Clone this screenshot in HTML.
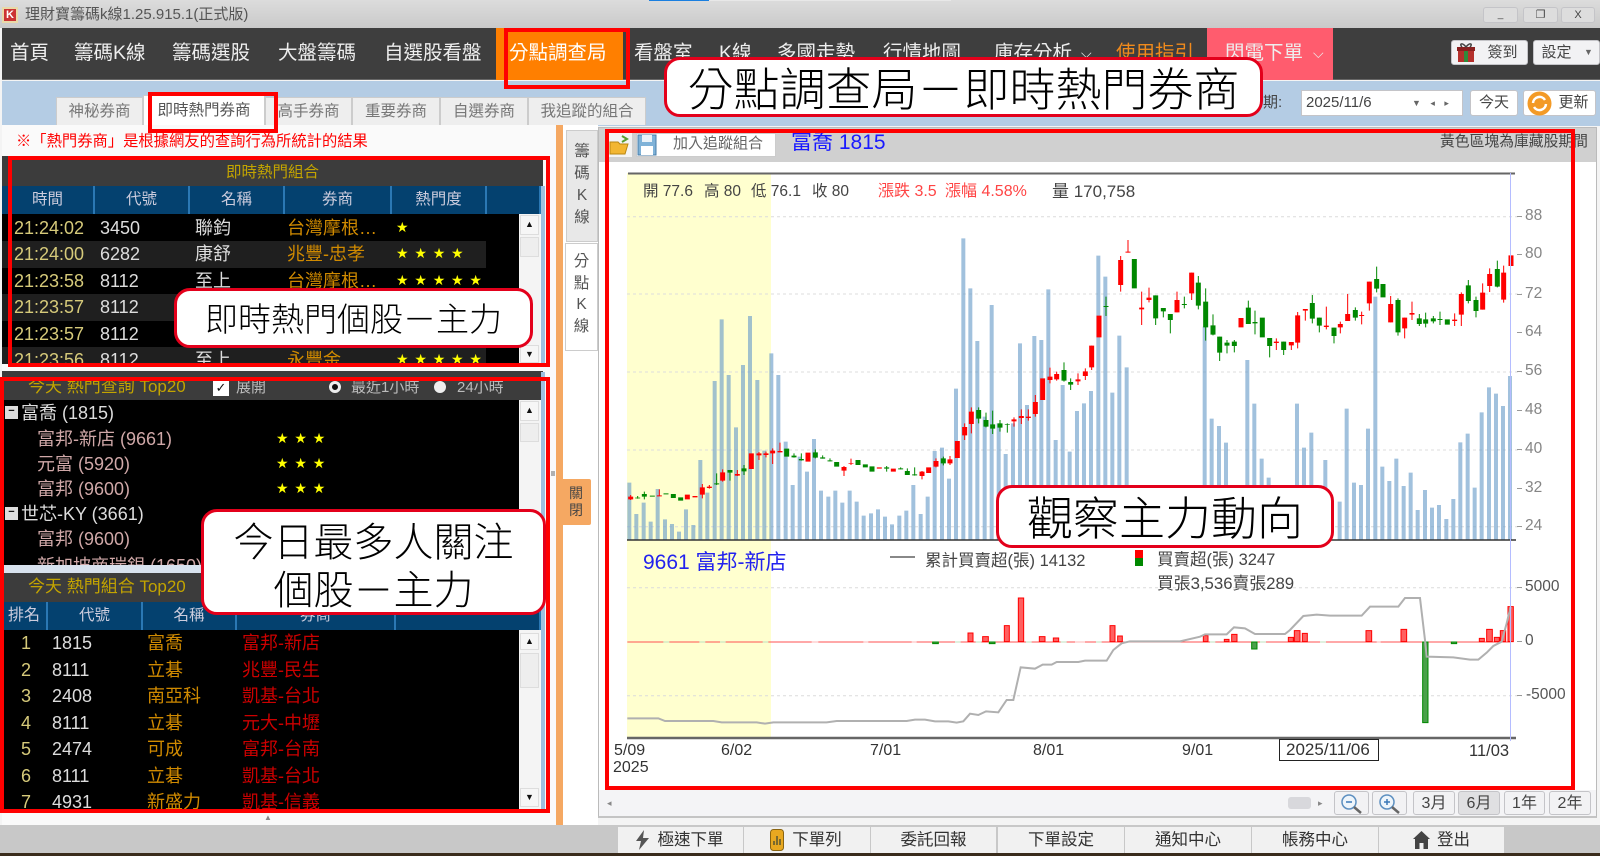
<!DOCTYPE html>
<html lang="zh-Hant"><head><meta charset="utf-8"><title>理財寶籌碼k線</title>
<style>
*{box-sizing:border-box}
html,body{margin:0;padding:0;width:1600px;height:856px;overflow:hidden;background:#f4f4f4}
body{position:relative;font-family:"Liberation Sans","Noto Sans CJK TC",sans-serif;font-size:15px;color:#333;filter:blur(.35px)}
.b,.t{position:absolute}
.t{white-space:nowrap;line-height:20px;height:20px}
.n{color:#eee;font-size:19.5px;top:43px}
.tab{position:absolute;top:97px;height:28px;background:#eee;border:1px solid #ccc;border-bottom:0;color:#777;font-size:15.5px;line-height:28px;text-align:center}
.hd{position:absolute;background:#04416f;border-right:2px solid #2b78b4;color:#ccd;text-align:center;font-size:15.5px}
.r{position:absolute;left:0;width:484px;height:26.4px;line-height:26px;font-size:18px;white-space:nowrap}
.r i{position:absolute;top:0;font-style:normal}
.s{color:#ff0;font-family:"DejaVu Sans",sans-serif;font-size:14px;letter-spacing:5.8px;margin-left:-1px}
.frame{position:absolute;border:4.5px solid #f00}
.call{position:absolute;background:#fff;border:3.5px solid #e3001b;border-radius:16px;color:#000;text-align:center;font-family:"Noto Sans CJK TC","Noto Sans CJK SC",sans-serif;font-weight:300;white-space:nowrap}
.btn{position:absolute;background:#f2f2f4;border:1px solid #c4c4c8;border-radius:3px;text-align:center;color:#444}
.foot{position:absolute;top:827px;height:26px;background:#f1f1f1;text-align:center;line-height:26px;font-size:16.5px;color:#333}
.ax{position:absolute;left:1525px;color:#858585;font-size:15.5px;line-height:18px;height:18px}
.d{position:absolute;color:#333;font-size:16px;line-height:18px;white-space:nowrap}
.sb{position:absolute;left:519px;width:21px;background:#f4f4f4}
.ub{position:absolute;left:1px;width:19px;background:#f6f6f6;border:1px solid #ddd;color:#111;font-size:9px;line-height:17px;text-align:center}
</style></head><body>

<!-- title bar -->
<div class="b" style="left:0;top:0;width:1600px;height:28px;background:linear-gradient(#dcdcdc,#c9c9c9)"></div>
<div class="b" style="left:649px;top:0;width:60px;height:1px;background:#1a7fe0"></div>
<div class="b" style="left:709px;top:0;width:242px;height:1px;background:#e8e8e8"></div>
<div class="b" style="left:2px;top:7px;width:16px;height:16px;background:#c33;border:2px solid #e9d9a8;color:#fff;font:bold 11px/12px 'Liberation Sans',sans-serif;text-align:center">K</div>
<div class="t" style="left:25px;top:5px;font-size:15px;color:#555">理財寶籌碼k線1.25.915.1(正式版)</div>
<div class="btn" style="left:1483px;top:7px;width:35px;height:16px;background:#ddd;font-size:10px;line-height:14px">_</div>
<div class="btn" style="left:1523px;top:7px;width:35px;height:16px;background:#ddd;font-size:11px;line-height:14px">❐</div>
<div class="btn" style="left:1561px;top:7px;width:34px;height:16px;background:#ddd;font-size:11px;line-height:14px">X</div>

<!-- nav -->
<div class="b" style="left:2px;top:28px;width:1598px;height:52px;background:#3e3e3e;border-bottom:1px solid #666"></div>
<div class="t n" style="left:10px">首頁</div>
<div class="t n" style="left:74px">籌碼K線</div>
<div class="t n" style="left:172px">籌碼選股</div>
<div class="t n" style="left:278px">大盤籌碼</div>
<div class="t n" style="left:384px">自選股看盤</div>
<div class="b" style="left:496px;top:28px;width:127px;height:52px;background:#ff7f00"></div>
<div class="t n" style="left:509px;color:#fff">分點調查局</div>
<div class="t n" style="left:634px">看盤室</div>
<div class="t n" style="left:719px">K線</div>
<div class="t n" style="left:777px">多國走勢</div>
<div class="t n" style="left:883px">行情地圖</div>
<div class="t n" style="left:994px">庫存分析</div>
<div class="t n" style="left:1081px;font-size:14px">⌵</div>
<div class="t n" style="left:1116px;color:#f08a1c">使用指引</div>
<div class="b" style="left:1207px;top:28px;width:126px;height:52px;background:#ff5c6e"></div>
<div class="t n" style="left:1225px">閃電下單</div>
<div class="t n" style="left:1313px;font-size:14px">⌵</div>
<div class="btn" style="left:1451px;top:40px;width:77px;height:25px;line-height:23px;padding-left:26px;font-size:15px">簽到</div>
<svg class="b" style="left:1456px;top:42px" width="20" height="21" viewBox="0 0 20 21"><rect x="2" y="6" width="16" height="14" fill="#b5302c"/><rect x="8" y="6" width="4" height="14" fill="#2f8a3a"/><rect x="1" y="5" width="18" height="4" fill="#8a2020"/><path d="M10 5C6 0 3 2 6 5M10 5c4-5 7-3 4 0" fill="none" stroke="#444" stroke-width="1.5"/></svg>
<div class="btn" style="left:1533px;top:40px;width:67px;height:25px;line-height:23px;padding-right:20px;font-size:15px">設定<span style="position:absolute;left:50px;font-size:9px;color:#666">▼</span></div>

<!-- tab strip -->
<div class="b" style="left:2px;top:81px;width:1598px;height:45px;background:#b4cce4"></div>
<div class="tab" style="left:56px;width:87px">神秘券商</div>
<div class="tab" style="left:143px;top:95px;width:122px;height:30px;background:#fff;color:#555;line-height:30px">即時熱門券商</div>
<div class="tab" style="left:265px;width:87px">高手券商</div>
<div class="tab" style="left:352px;width:88px">重要券商</div>
<div class="tab" style="left:440px;width:88px">自選券商</div>
<div class="tab" style="left:528px;width:118px">我追蹤的組合</div>
<div class="t" style="left:1248px;top:93px;color:#444;font-size:15px">日期:</div>
<div class="b" style="left:1301px;top:90px;width:162px;height:26px;background:#fff;border:1px solid #c4c4c8"></div>
<div class="t" style="left:1306px;top:93px;color:#444;font-size:15px">2025/11/6</div>
<div class="t" style="left:1412px;top:93px;color:#666;font-size:9px;word-spacing:7px">▼ ◂ ▸</div>
<div class="btn" style="left:1470px;top:90px;width:48px;height:26px;line-height:24px;background:#fff;font-size:15px">今天</div>
<div class="btn" style="left:1523px;top:90px;width:73px;height:26px;line-height:24px;background:#fff;padding-left:28px;font-size:15px">更新</div>
<svg class="b" style="left:1527px;top:91px" width="25" height="25" viewBox="0 0 25 25"><circle cx="12.5" cy="12.5" r="12" fill="#f39a26"/><path d="M6 12a6.500 6.500 0 0 1 12-3M19 13a6.500 6.500 0 0 1-12 3" fill="none" stroke="#fff" stroke-width="2.500"/></svg>

<!-- left panel -->
<div class="b" style="left:2px;top:125px;width:554px;height:700px;background:#fafafa"></div>
<div class="t" style="left:16px;top:132px;color:#f00;font-size:15.300px">※「熱門券商」是根據網友的查詢行為所統計的結果</div>

<!-- table 1 -->
<div class="b" style="left:2px;top:156px;width:541px;height:30px;background:#3c3c3c;color:#c3a400;text-align:center;line-height:34px;font-size:15.500px">即時熱門組合</div>
<div class="hd" style="left:2px;top:186px;width:93px;height:28px;line-height:28px">時間</div>
<div class="hd" style="left:95px;top:186px;width:95px;height:28px;line-height:28px">代號</div>
<div class="hd" style="left:190px;top:186px;width:95px;height:28px;line-height:28px">名稱</div>
<div class="hd" style="left:285px;top:186px;width:107px;height:28px;line-height:28px">券商</div>
<div class="hd" style="left:392px;top:186px;width:95px;height:28px;line-height:28px">熱門度</div>
<div class="hd" style="left:487px;top:186px;width:54px;height:28px"></div>
<div class="b" style="left:2px;top:214px;width:517px;height:150px;background:#000;overflow:hidden">
<div class="r" style="top:1px"><i style="left:12px;color:#d6ca7a">21:24:02</i><i style="left:98px;color:#ddd">3450</i><i style="left:193px;color:#ddd">聯鈞</i><i style="left:285px;color:#d08a00">台灣摩根…</i><i class="s" style="left:395px">★</i></div>
<div class="r" style="top:27.400px;background:#1f1f1f"><i style="left:12px;color:#d6ca7a">21:24:00</i><i style="left:98px;color:#ddd">6282</i><i style="left:193px;color:#ddd">康舒</i><i style="left:285px;color:#d08a00">兆豐-忠孝</i><i class="s" style="left:395px">★★★★</i></div>
<div class="r" style="top:53.800px"><i style="left:12px;color:#d6ca7a">21:23:58</i><i style="left:98px;color:#ddd">8112</i><i style="left:193px;color:#ddd">至上</i><i style="left:285px;color:#d08a00">台灣摩根…</i><i class="s" style="left:395px">★★★★★</i></div>
<div class="r" style="top:80.200px;background:#1f1f1f"><i style="left:12px;color:#d6ca7a">21:23:57</i><i style="left:98px;color:#ddd">8112</i></div>
<div class="r" style="top:106.600px"><i style="left:12px;color:#d6ca7a">21:23:57</i><i style="left:98px;color:#ddd">8112</i></div>
<div class="r" style="top:133px;background:#1f1f1f"><i style="left:12px;color:#d6ca7a">21:23:56</i><i style="left:98px;color:#ddd">8112</i><i style="left:193px;color:#ddd">至上</i><i style="left:285px;color:#d08a00">永豐金</i><i class="s" style="left:395px">★★★★★</i></div>
</div>
<div class="sb" style="top:214px;height:150px"><div class="ub" style="top:1px;height:20px">▲</div><div class="ub" style="top:23px;height:20px;background:#eee"></div><div class="ub" style="top:131px;height:18px">▼</div></div>
<div class="b" style="left:541px;top:186px;width:4px;height:180px;background:#9fc0e0"></div>

<!-- section 2 -->
<div class="b" style="left:2px;top:371px;width:541px;height:29px;background:#3c3c3c"></div>
<div class="t" style="left:28px;top:377px;color:#c3a400;font-size:17px">今天 熱門查詢 Top20</div>
<div class="b" style="left:213px;top:381px;width:16px;height:15px;background:#fff;color:#111;font:bold 13px/15px 'DejaVu Sans',sans-serif;text-align:center">✓</div>
<div class="t" style="left:236px;top:378px;color:#bbb">展開</div>
<div class="b" style="left:329px;top:381px;width:12px;height:12px;border-radius:50%;background:#111;border:3px solid #eee"></div>
<div class="t" style="left:351px;top:378px;color:#bbb">最近1小時</div>
<div class="b" style="left:434px;top:381px;width:12px;height:12px;border-radius:50%;background:#eee"></div>
<div class="t" style="left:457px;top:378px;color:#bbb">24小時</div>
<div class="b" style="left:2px;top:400px;width:517px;height:165px;background:#000;overflow:hidden">
<div class="r" style="top:0"><i style="left:3px;top:6px;width:13px;height:13px;background:#ddd;color:#111;font:bold 11px/11px 'Liberation Sans',sans-serif;text-align:center">−</i><i style="left:19px;color:#ddd">富喬 (1815)</i></div>
<div class="r" style="top:26px"><i style="left:35px;color:#d0a8a8">富邦-新店 (9661)</i><i class="s" style="left:275px">★★★</i></div>
<div class="r" style="top:51px"><i style="left:35px;color:#d0a8a8">元富 (5920)</i><i class="s" style="left:275px">★★★</i></div>
<div class="r" style="top:76px"><i style="left:35px;color:#d0a8a8">富邦 (9600)</i><i class="s" style="left:275px">★★★</i></div>
<div class="r" style="top:101px"><i style="left:3px;top:6px;width:13px;height:13px;background:#ddd;color:#111;font:bold 11px/11px 'Liberation Sans',sans-serif;text-align:center">−</i><i style="left:19px;color:#ddd">世芯-KY (3661)</i></div>
<div class="r" style="top:126px"><i style="left:35px;color:#d0a8a8">富邦 (9600)</i></div>
<div class="r" style="top:153px"><i style="left:35px;color:#d0a8a8">新加坡商瑞銀 (1650)</i></div>
</div>
<div class="sb" style="top:400px;height:165px"><div class="ub" style="top:1px;height:20px">▲</div><div class="ub" style="top:23px;height:19px;background:#eee"></div></div>
<div class="b" style="left:541px;top:372px;width:4px;height:440px;background:#9fc0e0"></div>
<div class="b" style="left:2px;top:565px;width:541px;height:8px;background:#d8e2ee"></div>

<!-- section 3 -->
<div class="b" style="left:2px;top:573px;width:541px;height:29px;background:#3c3c3c"></div>
<div class="t" style="left:28px;top:577px;color:#c3a400;font-size:17px">今天 熱門組合 Top20</div>
<div class="hd" style="left:2px;top:602px;width:46px;height:28px;line-height:28px;font-size:16px">排名</div>
<div class="hd" style="left:48px;top:602px;width:95px;height:28px;line-height:28px">代號</div>
<div class="hd" style="left:143px;top:602px;width:94px;height:28px;line-height:28px">名稱</div>
<div class="hd" style="left:237px;top:602px;width:159px;height:28px;line-height:28px">券商</div>
<div class="hd" style="left:396px;top:602px;width:145px;height:28px"></div>
<div class="b" style="left:2px;top:630px;width:517px;height:180px;background:#000;overflow:hidden">
<div class="r" style="top:0"><i style="left:19px;color:#d6ca7a">1</i><i style="left:50px;color:#ddd">1815</i><i style="left:145px;color:#d08a00">富喬</i><i style="left:240px;color:#cc0000">富邦-新店</i></div>
<div class="r" style="top:27px"><i style="left:19px;color:#d6ca7a">2</i><i style="left:50px;color:#ddd">8111</i><i style="left:145px;color:#d08a00">立碁</i><i style="left:240px;color:#cc0000">兆豐-民生</i></div>
<div class="r" style="top:53px"><i style="left:19px;color:#d6ca7a">3</i><i style="left:50px;color:#ddd">2408</i><i style="left:145px;color:#d08a00">南亞科</i><i style="left:240px;color:#cc0000">凱基-台北</i></div>
<div class="r" style="top:80px"><i style="left:19px;color:#d6ca7a">4</i><i style="left:50px;color:#ddd">8111</i><i style="left:145px;color:#d08a00">立碁</i><i style="left:240px;color:#cc0000">元大-中壢</i></div>
<div class="r" style="top:106px"><i style="left:19px;color:#d6ca7a">5</i><i style="left:50px;color:#ddd">2474</i><i style="left:145px;color:#d08a00">可成</i><i style="left:240px;color:#cc0000">富邦-台南</i></div>
<div class="r" style="top:133px"><i style="left:19px;color:#d6ca7a">6</i><i style="left:50px;color:#ddd">8111</i><i style="left:145px;color:#d08a00">立碁</i><i style="left:240px;color:#cc0000">凱基-台北</i></div>
<div class="r" style="top:159px"><i style="left:19px;color:#d6ca7a">7</i><i style="left:50px;color:#ddd">4931</i><i style="left:145px;color:#d08a00">新盛力</i><i style="left:240px;color:#cc0000">凱基-信義</i></div>
</div>
<div class="sb" style="top:630px;height:180px"><div class="ub" style="top:3px;height:17px;line-height:14px">▲</div><div class="ub" style="top:23px;height:35px;background:#eee"></div><div class="ub" style="top:158px;height:19px">▼</div></div>
<div class="t" style="left:264px;top:808px;color:#888;font-size:8px">▲</div>

<!-- divider & vertical tabs -->
<div class="b" style="left:556px;top:125px;width:7px;height:700px;background:#f5a862"></div>
<div class="b" style="left:563px;top:125px;width:35px;height:700px;background:#fff"></div>
<div class="b" style="left:566px;top:130px;width:32px;height:112px;background:#e8e8e8;border:1px solid #ccc;color:#555;text-align:center;font-size:15.500px;line-height:22px;padding-top:10px">籌<br>碼<br>K<br>線</div>
<div class="b" style="left:565px;top:243px;width:33px;height:108px;background:#fff;border:1px solid #ccc;color:#555;text-align:center;font-size:15.500px;line-height:21.500px;padding-top:7px">分<br>點<br>K<br>線</div>
<div class="b" style="left:551px;top:471px;width:4px;height:5px;background:#b0b0b0"></div>
<div class="b" style="left:561px;top:479px;width:30px;height:46px;background:#f5a862;color:#444;text-align:center;font-size:14px;line-height:17px;padding-top:6px;border-radius:2px">關<br>閉</div>

<!-- right panel -->
<div class="b" style="left:598px;top:127px;width:999px;height:691px;background:#fff;border:1px solid #bbb;border-bottom:3px solid #c4c4c4"></div>
<div class="b" style="left:599px;top:128px;width:997px;height:34px;background:#d0d0d0"></div>
<svg class="b" style="left:606px;top:133px" width="26" height="24" viewBox="0 0 26 24"><rect width="26" height="24" fill="#f4f4f4"/><path d="M4 9h8l2 2h8l-3 10H4z" fill="#f2b632" stroke="#b98610"/><path d="M16 3l5 3-5 3" fill="none" stroke="#5a9e2e" stroke-width="2"/></svg>
<div class="b" style="left:636px;top:133px;width:140px;height:24px;background:#fff;border:1px solid #ccc"></div>
<svg class="b" style="left:637px;top:134px" width="20" height="22" viewBox="0 0 20 22"><rect x="1" y="1" width="18" height="20" fill="#7fb2d8" stroke="#4a7da8"/><rect x="5" y="1" width="10" height="7" fill="#eaf2f8"/><rect x="4" y="12" width="12" height="9" fill="#fff"/></svg>
<div class="t" style="left:673px;top:134px;color:#666;font-size:15px">加入追蹤組合</div>
<div class="t" style="left:791px;top:133px;color:#1a1aff;font-size:21px">富喬 1815</div>
<div class="t" style="left:1440px;top:132px;color:#444;font-size:14.800px">黃色區塊為庫藏股期間</div>

<!-- chart svg -->
<svg class="b" style="left:0;top:0" width="1600" height="856" viewBox="0 0 1600 856">
<rect x="627" y="173" width="144" height="565" fill="#ffffcf"/>
<path d="M627 216.700H1522M627 294H1522M627 372H1522M627 450H1522M627 526.700H1522M627 587.700H1522M627 695.700H1522" stroke="#dcdcdc" stroke-dasharray="3 3" fill="none"/>
<path d="M1517 216.500h5M1517 254.500h5M1517 294.500h5M1517 332.500h5M1517 371.500h5M1517 410.500h5M1517 449.500h5M1517 488.500h5M1517 526.500h5M1517 587.500h5M1517 641.500h5M1517 695.500h5" stroke="#999"/>
<g transform="translate(610,190) scale(.33333)">
<path stroke="#6f9fcb" stroke-opacity=".65" stroke-width="12" fill="none" d="M58 878V1050M79 972V1050M101 938V1050M122 995V1050M143 897V1050M165 988V1050M186 1002V1050M207 1025V1050M228 958V1050M250 1005V1050M271 810V1050M292 908V1050M314 573V1050M335 388V1050M356 555V1050M378 712V1050M399 525V1050M420 378V1050M442 570V1050M463 782V1050M484 490V1050M505 555V1050M527 755V1050M548 885V1050M569 800V1050M591 845V1050M612 747V1050M633 902V1050M655 920V1050M676 902V1050M697 938V1050M719 902V1050M740 935V1050M761 977V1050M783 970V1050M804 958V1050M825 980V1050M846 1003V1050M868 977V1050M889 962V1050M910 885V1050M932 972V1050M953 920V1050M974 783V1050M996 773V1050M1017 866V1050M1038 596V1050M1060 145V1050M1081 295V1050M1102 453V1050M1124 680V1050M1145 345V1050M1166 700V1050M1187 792V1050M1209 700V1050M1230 460V1050M1251 645V1050M1273 438V1050M1294 450V1050M1315 298V1050M1337 750V1050M1358 585V1050M1379 785V1050M1401 663V1050M1422 640V1050M1443 603V1050M1465 197V1050M1486 260V1050M1507 608V1050M1528 437V1050M1550 532V1050M1784 410V1050M1805 686V1050M1827 708V1050M1848 758V1050M1912 510V1050M1933 641V1050M1955 806V1050M1976 863V1050M2061 641V1050M2082 773V1050M2104 728V1050M2146 810V1050M2189 935V1050M2210 656V1050M2232 878V1050M2253 885V1050M2274 716V1050M2296 320V1050M2317 830V1050M2338 873V1050M2359 806V1050M2381 888V1050M2402 848V1050M2423 960V1050M2445 900V1050M2466 953V1050M2487 945V1050M2509 987V1050M2530 927V1050M2551 757V1050M2573 731V1050M2594 893V1050M2615 667V1050M2637 592V1050M2658 611V1050M2679 648V1050M2700 558V1050"/>
<!-- red wicks -->
<path stroke="#f00" stroke-width="3" fill="none" d="M62 915V930M148 898V918M277 882V925M298 885V896M338 838V875M382 840V858M447 786V810M468 785V802M488 775V822M510 758V787M702 828V858M723 806V825M936 843V868M978 805V832M1020 798V825M1064 700V750M1084 652V730M1212 682V710M1234 658V702M1255 658V692M1276 615V680M1320 533V580M1340 545V572M1404 550V585M1426 535V570M1445 467V540M1532 198V305M1554 150V188M1595 305V405M1617 293V337M1701 305V367M1745 248V330M1999 445V480M2044 456V480M2063 366V475M2086 357V392M2149 350V418M2191 395V430M2213 312V393M2255 365V403M2278 275V362M2342 318V397M2384 383V445M2406 335V390M2534 370V408M2554 307V408M2618 280V359M2639 235V306M2681 227V338"/>
<!-- red bodies -->
<path stroke="#f00" stroke-width="15" fill="none" d="M62 920V928M148 916V919M232 914V928M255 918V922M277 892V914M298 890V894M338 847V872M382 852V857M424 790V837M447 790V796M468 790V795M488 782V790M510 783V787M594 788V815M702 831V842M723 820V822M808 832V836M850 836V845M936 845V858M956 832V849M978 813V830M1020 808V820M1042 753V804M1064 711V736M1084 665V702M1212 688V694M1234 678V684M1255 680V684M1276 636V672M1298 565V630M1320 560V570M1340 552V568M1404 568V574M1426 544V558M1445 467V532M1467 377V442M1532 210V285M1554 185V188M1595 353V358M1617 323V330M1701 330V367M1745 248V310M1893 384V412M1999 455V459M2044 456V466M2063 376V458M2086 357V362M2149 407V411M2191 402V412M2213 372V393M2255 375V378M2278 275V340M2342 342V397M2384 383V415M2406 369V374M2534 389V393M2554 312V374M2618 308V359M2639 252V288M2681 248V329M2703 196V228"/>
<!-- green wicks -->
<path stroke="#080" stroke-width="3" fill="none" d="M83 918V926M103 905V928M320 850V885M360 840V872M402 825V855M552 790V803M574 790V812M616 778V805M638 796V806M660 805V814M830 828V845M872 832V838M892 835V855M914 832V857M1000 800V826M1106 652V700M1128 668V712M1148 662V732M1170 690V725M1192 700V728M1362 517V575M1382 565V600M1488 320V378M1637 316V405M1660 354V382M1681 372V430M1723 320V355M1765 258V358M1787 295V452M1809 373V436M1829 440V513M1851 450V490M1873 450V487M1915 332V402M1935 362V433M1979 444V502M2021 455V495M2107 315V400M2128 383V427M2172 413V460M2236 352V392M2300 230V307M2364 325V437M2428 372V408M2447 368V412M2470 378V400M2490 365V405M2575 270V340M2598 320V382M2662 212V292"/>
<!-- green bodies -->
<path stroke="#080" stroke-width="15" fill="none" d="M83 923V925M103 912V920M127 917V920M168 910V913M190 912V924M212 922V932M320 880V883M360 840V848M402 835V844M530 776V800M552 797V802M574 807V811M616 787V803M638 802V806M660 811V814M680 816V830M744 810V825M766 823V832M786 829V845M830 832V836M872 835V838M892 843V855M914 853V856M1000 805V820M1106 660V686M1128 690V710M1148 703V716M1170 700V713M1192 703V705M1362 540V572M1382 576V584M1488 348V351M1573 207V295M1637 316V385M1660 354V364M1681 372V390M1723 342V345M1765 278V347M1787 335V412M1809 406V434M1829 440V488M1851 458V467M1873 455V468M1915 353V402M1935 396V400M1957 383V442M1979 444V468M2021 455V480M2107 339V386M2128 383V407M2172 413V438M2236 360V383M2300 267V296M2319 282V322M2364 330V427M2428 385V402M2447 388V401M2470 385V394M2490 387V390M2512 388V404M2575 286V333M2598 330V363M2662 237V290"/>
</g>
<path d="M627 540H1516" stroke="#333" stroke-width="1.500"/>
<path d="M628 173.500H1515" stroke="#666" stroke-width="2"/>
<g transform="translate(610,540) scale(.33333)">
<path d="M52 306H2700" stroke="#ff5050" stroke-width="3"/>
<path d="M160 306h18M268 306h18M330 306h17M458 306h17M1035 306h17M1097 306h17M1248 306h17M1352 306h18M1458 306h17M1800 306h16M1950 306h18M2130 306h18" stroke="#bfe0bf" stroke-width="3"/>
<path d="M605 306h20M760 306h15M905 306h15M1395 306h30M2300 306h12" stroke="#fff" stroke-opacity=".6" stroke-width="3"/>
<path fill="#ff6060" stroke="#f00" stroke-width="3" d="M1074 279h15v26h-15zM1118 290h17v15h-17zM1183 257h15v48h-15zM1225 174h16v131h-16zM1288 290h17v15h-17zM1330 294h16v11h-16zM1500 257h15v48h-15zM1523 288h14v17h-14zM1780 287h14v18h-14zM1843 298h14v7h-14zM1865 283h16v22h-16zM2035 292h15v13h-15zM2053 272h17v33h-17zM2077 280h15v25h-15zM2268 272h17v33h-17zM2373 268h17v37h-17zM2608 295h15v10h-15zM2630 268h17v37h-17zM2653 292h15v13h-15zM2671 272h16v33h-16zM2694 200h16v105h-16z"/>
<path fill="#4ba04b" stroke="#080" stroke-width="3" d="M1925 306h16v21h-16zM2438 306h16v242h-16zM2524 306h16v5h-16zM968 306h17v5h-17zM1138 306h17v5h-17z"/>
<path fill="none" stroke="#b0b0b0" stroke-width="6" d="M52 535H145L165 543H310L335 547H440L465 551L490 547H650L680 543H890L915 539H945L975 544H1015L1040 548L1060 544L1080 521L1105 525L1128 514L1165 517L1190 480H1210L1232 382L1275 386L1298 374H1325L1340 366H1405L1425 362H1490L1510 330L1535 310L1560 304H1710L1770 290L1785 283H1850L1872 262L1905 265L1935 282H2025L2040 270L2080 228L2120 224L2160 227H2255L2280 200H2365L2385 174H2430L2445 300L2450 350L2530 352L2580 359H2605L2630 338L2650 318L2675 305L2690 250L2702 200"/>
</g>
<path d="M627 738H1516" stroke="#666" stroke-width="2.500"/>
<path d="M1510.500 173V741" stroke="#b4bcff" stroke-width="1"/>
<rect x="1279.500" y="739.500" width="99" height="21" fill="#fff" stroke="#222"/>
<path d="M890 557H915" stroke="#888" stroke-width="2"/>
<rect x="1135" y="550" width="8" height="8" fill="#f00"/><rect x="1135" y="558" width="8" height="8" fill="#080"/>
</svg>

<!-- chart texts -->
<div class="t" style="left:643px;top:182px;color:#444;font-size:15.500px">開 77.6</div>
<div class="t" style="left:704px;top:182px;color:#444;font-size:15.500px">高 80</div>
<div class="t" style="left:751px;top:182px;color:#444;font-size:15.500px">低 76.1</div>
<div class="t" style="left:812px;top:182px;color:#444;font-size:15.500px">收 80</div>
<div class="t" style="left:878px;top:182px;color:#f44;font-size:16px">漲跌 3.5</div>
<div class="t" style="left:945px;top:182px;color:#f44;font-size:16px">漲幅 4.58%</div>
<div class="t" style="left:1052px;top:182px;color:#444;font-size:17px">量 170,758</div>
<div class="ax" style="top:207px">88</div><div class="ax" style="top:245px">80</div><div class="ax" style="top:285px">72</div><div class="ax" style="top:323px">64</div><div class="ax" style="top:362px">56</div><div class="ax" style="top:401px">48</div><div class="ax" style="top:440px">40</div><div class="ax" style="top:479px">32</div><div class="ax" style="top:517px">24</div>
<div class="ax" style="top:578px;color:#555">5000</div><div class="ax" style="top:632px;color:#555">0</div><div class="ax" style="top:686px;left:1526px;color:#555">-5000</div>
<div class="t" style="left:643px;top:553px;color:#2222ee;font-size:21px">9661 富邦-新店</div>
<div class="t" style="left:925px;top:551px;color:#444;font-size:16.500px">累計買賣超(張) 14132</div>
<div class="t" style="left:1157px;top:550px;color:#444;font-size:16.500px">買賣超(張) 3247</div>
<div class="t" style="left:1157px;top:574px;color:#444;font-size:16.800px">買張3,536賣張289</div>
<div class="d" style="left:614px;top:742px">5/09</div><div class="d" style="left:613px;top:759px">2025</div>
<div class="d" style="left:721px;top:742px">6/02</div><div class="d" style="left:870px;top:742px">7/01</div><div class="d" style="left:1033px;top:742px">8/01</div><div class="d" style="left:1182px;top:742px">9/01</div>
<div class="d" style="left:1286px;top:741px;font-size:17px">2025/11/06</div><div class="d" style="left:1469px;top:742px;font-size:16.500px">11/03</div>

<!-- bottom control bar -->
<div class="b" style="left:599px;top:790px;width:997px;height:26px;background:#f4f4f6"></div>
<div class="t" style="left:607px;top:793px;color:#888;font-size:9px">◂</div>
<div class="b" style="left:1288px;top:797px;width:23px;height:12px;background:#d8d8dc;border-radius:3px"></div>
<div class="t" style="left:1318px;top:793px;color:#888;font-size:9px">▸</div>
<div class="btn" style="left:1334px;top:791px;width:35px;height:24px"></div>
<div class="btn" style="left:1372px;top:791px;width:35px;height:24px"></div>
<svg class="b" style="left:1340px;top:793px" width="24" height="22" viewBox="0 0 24 22"><circle cx="9" cy="9" r="7" fill="#eef5fb" stroke="#5c8fc0" stroke-width="1.500"/><path d="M6 9h6" stroke="#3a78b8" stroke-width="1.500"/><path d="M14 14l7 6" stroke="#666" stroke-width="2.500"/></svg>
<svg class="b" style="left:1378px;top:793px" width="24" height="22" viewBox="0 0 24 22"><circle cx="9" cy="9" r="7" fill="#eef5fb" stroke="#5c8fc0" stroke-width="1.500"/><path d="M6 9h6M9 6v6" stroke="#3a78b8" stroke-width="1.500"/><path d="M14 14l7 6" stroke="#666" stroke-width="2.500"/></svg>
<div class="btn" style="left:1413px;top:791px;width:42px;height:24px;line-height:23px;font-size:16px">3月</div>
<div class="btn" style="left:1458px;top:791px;width:42px;height:24px;line-height:23px;font-size:16px;background:#e0e0e2">6月</div>
<div class="btn" style="left:1504px;top:791px;width:41px;height:24px;line-height:23px;font-size:16px">1年</div>
<div class="btn" style="left:1549px;top:791px;width:42px;height:24px;line-height:23px;font-size:16px">2年</div>

<!-- footer -->
<div class="b" style="left:0;top:825px;width:1600px;height:28px;background:#c8c8c8"></div>
<div class="b" style="left:0;top:853px;width:1600px;height:3px;background:#3a2c1c"></div>
<div class="foot" style="left:618px;width:125px;padding-left:20px">極速下單</div>
<div class="foot" style="left:744px;width:126px;padding-left:20px">下單列</div>
<div class="foot" style="left:871px;width:125px">委託回報</div>
<div class="foot" style="left:998px;width:126px">下單設定</div>
<div class="foot" style="left:1125px;width:126px">通知中心</div>
<div class="foot" style="left:1252px;width:126px">帳務中心</div>
<div class="foot" style="left:1379px;width:125px;padding-left:24px">登出</div>
<svg class="b" style="left:634px;top:830px" width="16" height="20" viewBox="0 0 16 20"><path d="M10 0L2 11h5L5 20l10-12H9z" fill="#555"/></svg>
<svg class="b" style="left:770px;top:829px" width="14" height="22" viewBox="0 0 14 22"><rect x=".5" y=".5" width="13" height="21" rx="3" fill="#e8a820" stroke="#8a6410"/><path d="M4 16v-4M7 16V7M10 16v-6" stroke="#553" stroke-width="1.500"/></svg>
<svg class="b" style="left:1413px;top:831px" width="17" height="18" viewBox="0 0 17 18"><path d="M8.500 0L0 8h2v10h4.500v-6h4v6H15V8h2z" fill="#444"/></svg>

<!-- red frames -->
<div class="frame" style="left:504px;top:28px;width:126px;height:61px"></div>
<div class="frame" style="left:148px;top:92px;width:130px;height:41px"></div>
<div class="frame" style="left:8px;top:156px;width:542px;height:211px"></div>
<div class="frame" style="left:0;top:377px;width:550px;height:436px"></div>
<div class="frame" style="left:605px;top:129px;width:970px;height:661px"></div>

<!-- callouts -->
<div class="call" style="left:664px;top:57px;width:599px;height:60px;font-size:46px;line-height:54px">分點調查局－即時熱門券商</div>
<div class="call" style="left:174px;top:288px;width:359px;height:60px;font-size:33px;line-height:53px">即時熱門個股－主力</div>
<div class="call" style="left:201px;top:509px;width:345px;height:106px;font-size:40px;line-height:48px;padding-top:3px">今日最多人關注<br>個股－主力</div>
<div class="call" style="left:996px;top:485px;width:338px;height:63px;font-size:46px;line-height:56px">觀察主力動向</div>
</body></html>
